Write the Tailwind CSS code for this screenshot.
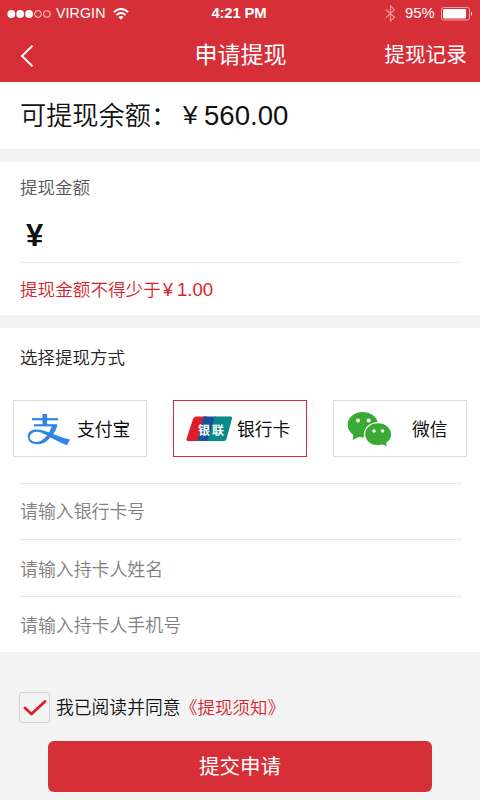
<!DOCTYPE html>
<html lang="zh-CN">
<head>
<meta charset="utf-8">
<title>申请提现</title>
<script src="https://cdn.jsdelivr.net/npm/@tailwindcss/browser@4"></script>
</head>
<body class="bg-[#f3f3f3] font-['Liberation_Sans','Noto_Sans_CJK_SC',sans-serif] text-[#111]">
<main class="w-[480px] h-[800px] overflow-hidden flex flex-col whitespace-nowrap">
  <header class="h-[82px] shrink-0 bg-[#d62f37] text-white">
    <div class="h-[27px] grid grid-cols-[1fr_auto_1fr] items-center pl-[7px] pr-[7px] text-[14px] leading-[27px]">
      <div class="flex items-center">
        <svg width="44" height="10" viewBox="0 0 44 10" fill="white"><circle cx="4.3" cy="5" r="3.9"/><circle cx="13.2" cy="5" r="3.9"/><circle cx="22.1" cy="5" r="3.9"/><g fill="none" stroke="white" stroke-width=".8"><circle cx="31" cy="5" r="3.4"/><circle cx="39.9" cy="5" r="3.4"/></g></svg>
        <span class="ml-[5px] w-[50px] text-[14.2px] tracking-[0.1px]">VIRGIN</span>
        <svg class="ml-[7px]" width="16" height="12" viewBox="0 0 16 12" fill="none" stroke="white" stroke-width="1.9"><path d="M.8 4.1Q8-2.3 15.2 4.1M3.4 7Q8 3 12.6 7"/><path d="M5.4 9Q8 6.9 10.6 9L8 11.7Z" fill="white" stroke="none"/></svg>
      </div>
      <span class="font-bold text-[14.8px] tracking-[-0.1px] -ml-[2px]">4:21 PM</span>
      <div class="flex items-center justify-end">
        <svg width="11" height="17" viewBox="0 0 11 17" fill="none" stroke="#f09a9d" stroke-width="1.1"><path d="M1 4.5l8.5 7.8-4 3.7V1l4 3.7L1 12.5"/></svg>
        <span class="ml-[9px] text-[14.8px] w-[30px]">95%</span>
        <svg class="ml-[6px]" width="32" height="14" viewBox="0 0 32 14"><rect x=".5" y=".5" width="28" height="12.5" rx="2" fill="none" stroke="#f0a0a4"/><rect x="2" y="2" width="23" height="9.5" rx="1" fill="white"/><path d="M30 4.5q2 2.2 0 4.5z" fill="white"/></svg>
      </div>
    </div>
    <div class="h-[55px] grid grid-cols-[1fr_auto_1fr] items-center pl-5 pr-[13px]">
      <svg class="mt-[2px]" width="15" height="24" viewBox="0 0 15 24" fill="none" stroke="white" stroke-width="2"><path d="M12.5 1.8L2 12l10.5 10.3"/></svg>
      <h1 class="text-[23px] leading-[55px] font-normal -ml-[6px]">申请提现</h1>
      <span class="text-right text-[20.7px] leading-[56px]">提现记录</span>
    </div>
  </header>

  <section class="h-[67px] shrink-0 bg-white flex items-center pl-5 text-[26.2px]">
    <span class="font-[350] w-[163px] pt-[3px]">可提现余额：</span><span class="w-[21px]">¥</span><span class="text-[27.6px]">560.00</span>
  </section>

  <section class="mt-[13px] h-[153px] shrink-0 bg-white pl-5 pr-[19px]">
    <h2 class="h-[51px] leading-[52px] text-[17.5px] font-[350] text-[#555]">提现金额</h2>
    <div class="h-[50px] border-b border-[#e8e8e8] pl-[6px] text-[31px] leading-[45px] font-bold">¥</div>
    <p class="flex text-[17.6px] leading-[54px] font-[350] text-[#d81f2d]"><span class="w-[143px]">提现金额不得少于</span><span class="w-[14px] font-normal">¥</span><span class="text-[18.6px]">1.00</span></p>
  </section>

  <section class="mt-[13px] h-[324px] shrink-0 bg-white">
    <h2 class="pl-5 h-[72px] leading-[61px] text-[17.5px] font-[350] text-[#222]">选择提现方式</h2>
    <div class="flex gap-[26px] pl-[13px] text-[17.8px]">
      <div class="w-[134px] h-[57px] border border-[#ddd] flex items-center pl-[13px]">
        <svg class="mt-[2px]" width="44" height="34" viewBox="0 0 44 34" fill="none" stroke="#2f86e4"><path d="M17.800 1v11" stroke-width="4.600"/><path d="M5 6.200h26" stroke-width="2.200"/><path d="M7 12.300h23" stroke-width="2.200"/><path d="M3.500 28.500C-1.500 24 .5 17.500 8 16.600C18 15.500 28 23.500 43 26.500L40 32.200C30 29.500 19 20 10.500 18.800C3.500 18.500 1.500 24 3.500 28.500Z" fill="#2f86e4" stroke="none"/><path d="M25 12h5.500C28.500 19 24 25.500 17.500 29.500C12 32.500 4 32 1.500 27L2 24C4.500 29.500 10 30 14.500 27.500C20 24 23.500 18 25 12Z" fill="#2f86e4" stroke="none"/></svg>
        <span class="ml-[6px] mt-[3px]">支付宝</span>
      </div>
      <div class="w-[134px] h-[57px] border border-[#d82832] flex items-center pl-[12px]">
        <svg class="mt-px" width="47" height="26" viewBox="0 0 47 26"><path d="M10 .5h11L14 25H2Q0 25 .5 23L7 3Q8 .5 10 .5Z" fill="#e01b2b"/><path d="M17.5.5H30L23.5 25H11.5Z" fill="#15539c"/><path d="M29 .5h16Q46.5.5 46 2.500L40.500 23Q40 25 38 25H21.500L28 3Q28.500.5 29 .5Z" fill="#078b86"/><g fill="white" font-family="Noto Sans CJK SC" font-weight="700" font-size="12"><text x="12" y="18.600">银</text><text x="26" y="18.600">联</text></g></svg>
        <span class="ml-[4px] mt-[3px]">银行卡</span>
      </div>
      <div class="w-[134px] h-[57px] border border-[#ddd] flex items-center pl-[13px]">
        <svg class="mt-[2px]" width="46" height="37" viewBox="0 0 46 37"><path d="M15.800 1C7 1 .6 6.700.6 13.800c0 4.200 2.300 7.700 5.700 10.100L5.700 29l5.900-3c1.400.3 2.800.5 4.200.5C24.500 26.500 31 21 31 13.800S24.500 1 15.800 1Z" fill="#39ab35"/><path d="M31 11.700c7.600 0 13.700 5.100 13.700 11.600 0 3.700-2 6.900-5 9l1.200 4-5.500-2.200c-1.400.5-2.900.7-4.400.7-7.600 0-13.500-5.100-13.500-11.500S23.400 11.700 31 11.700Z" fill="#39ab35" stroke="white" stroke-width="1.300"/><g fill="white"><circle cx="11" cy="9.500" r="2"/><circle cx="21.600" cy="9.500" r="2"/><circle cx="27" cy="20" r="1.700"/><circle cx="35.600" cy="20" r="1.700"/></g></svg>
        <span class="ml-[19px] mt-[3px]">微信</span>
      </div>
    </div>
    <div class="mt-[26px] ml-5 mr-[18px] text-[17.9px] font-[350] text-[#808080]">
      <div class="h-[56px] border-t border-[#e9e9e9] leading-[57px]">请输入银行卡号</div>
      <div class="h-[57px] border-t border-[#e9e9e9] leading-[60px]">请输入持卡人姓名</div>
      <div class="h-[55px] border-t border-[#e9e9e9] leading-[58px]">请输入持卡人手机号</div>
    </div>
  </section>

  <footer class="pt-[40px]">
    <div class="h-[31px] flex items-center pl-[19px] text-[17.8px] font-[350]">
      <span class="w-[31px] h-[31px] border border-[#d2d2d2] rounded-[3px] flex items-center justify-center"><svg width="24" height="18" viewBox="0 0 24 18" fill="none" stroke="#d81f2d" stroke-width="2.800" stroke-linecap="round" stroke-linejoin="round"><path d="M2 9L8.500 15L22 2.500"/></svg></span>
      <span class="ml-[6px] w-[124px] mt-[2px]">我已阅读并同意</span><span class="text-[#d81f2d] text-[17.500px] mt-[2px]">《提现须知》</span>
    </div>
    <button class="block mt-[18px] ml-[48px] w-[384px] h-[51px] rounded-[6px] bg-[#d62f37] text-white text-[20.500px] leading-[51px]">提交申请</button>
  </footer>
</main>
</body>
</html>
